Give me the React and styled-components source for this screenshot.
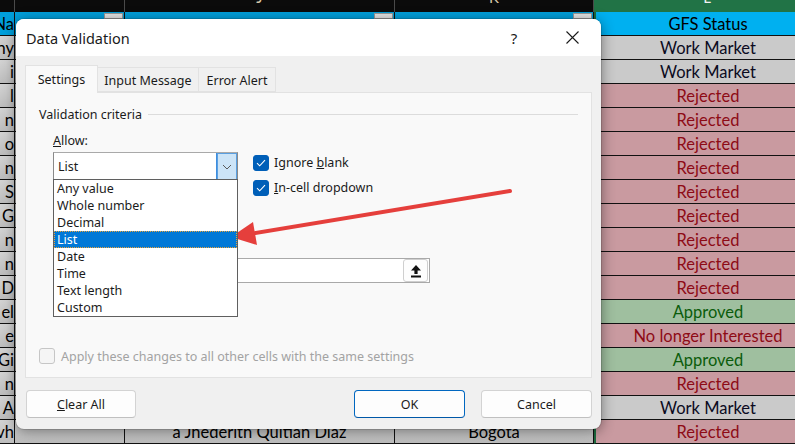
import React from 'react';
import styled, { createGlobalStyle } from 'styled-components';

const GlobalStyle = createGlobalStyle`
  html, body {
    margin: 0;
    padding: 0;
  }
  body {
    width: 795px;
    height: 445px;
    overflow: hidden;
    background: #ffffff;
    font-family: "Noto Sans", "Liberation Sans", sans-serif;
  }
`;

const UI_FONT = `"Noto Sans", "Open Sans", "Liberation Sans", sans-serif`;
const SHEET_FONT = `Lato, "Open Sans", "Liberation Sans", sans-serif`;

const tones = {
  grey: { bg: 'linear-gradient(180deg, #d3d3d3, #bdbdbd)', fg: '#000' },
  head: { bg: '#00a0dc', fg: '#000' },
  status: { bg: '#00b0f0', fg: '#000' },
  work: { bg: '#cacaca', fg: '#0b0b1e' },
  rejected: { bg: '#c99aa0', fg: '#8e0b16' },
  approved: { bg: '#9fbf9f', fg: '#0b5c0b' },
};

/* ---------- spreadsheet behind the dialog ---------- */

const Screen = styled.div`
  position: relative;
  width: 795px;
  height: 445px;
  overflow: hidden;
`;

const Sheet = styled.div`
  display: grid;
  grid-template-columns: 15px 110px 270px 199px 227px;
  grid-template-rows: 12px repeat(18, 24px);
`;

const ColHead = styled.div`
  display: flex;
  justify-content: center;
  overflow: hidden;
  background: ${p => (p.$active ? '#217346' : '#0b0b0b')};
  border-right: 1px solid #4a4a4a;
  color: ${p => (p.$active ? '#f2f2f2' : '#d8c8a8')};
  font: 15px/15px ${SHEET_FONT};
`;

const ColLetter = styled.span`
  margin-top: -10px;
`;

const Cell = styled.div`
  box-sizing: border-box;
  display: flex;
  align-items: ${p => (p.$top ? 'flex-start' : 'center')};
  justify-content: ${p => (p.$right ? 'flex-end' : 'center')};
  background: ${p => tones[p.$tone].bg};
  color: ${p => tones[p.$tone].fg};
  border-right: 1px solid #111;
  border-bottom: 1px solid #111;
  border-left: ${p => (p.$selected ? '2px solid #1d6b3f' : '0')};
  overflow: hidden;
  white-space: nowrap;
  font: 16.5px/20px ${SHEET_FONT};
  padding-top: ${p => (p.$top ? 0 : 1)}px;
`;

const FilterButton = styled.span`
  width: 19px;
  height: 6px;
  margin: 1px 1px 0 auto;
  background: #e6e6e6;
  border: 1px solid #9a9a9a;
  box-sizing: border-box;
`;

/* ---------- dialog ---------- */

const Dialog = styled.div`
  position: absolute;
  left: 16px;
  top: 19px;
  width: 585px;
  height: 410px;
  display: flex;
  flex-direction: column;
  background: #f0f0f0;
  border-radius: 8px;
  overflow: hidden;
  box-shadow: 0 2px 14px rgba(0, 0, 0, 0.45), 0 0 0 1px rgba(0, 0, 0, 0.12);
  font: 12.5px ${UI_FONT};
  color: #1b1b1b;
`;

const TitleBar = styled.div`
  height: 37px;
  flex: none;
  display: flex;
  align-items: center;
  background: #ffffff;
  padding-left: 10px;
`;

const Title = styled.div`
  flex: 1;
  font-size: 14.5px;
  color: #1a1a1a;
`;

const TitleButton = styled.div`
  width: 58px;
  height: 37px;
  display: flex;
  align-items: center;
  justify-content: center;
  font-size: 15px;
  color: #1a1a1a;
`;

const DialogBody = styled.div`
  flex: 1;
  display: flex;
  flex-direction: column;
  padding: 9px 9px 0 9px;
`;

const Tabs = styled.div`
  display: flex;
  align-items: flex-end;
  height: 27px;
`;

const Tab = styled.div`
  box-sizing: border-box;
  width: ${p => p.$w}px;
  height: ${p => (p.$active ? 28 : 25)}px;
  margin-bottom: ${p => (p.$active ? -1 : 0)}px;
  display: flex;
  align-items: center;
  justify-content: center;
  padding-top: ${p => (p.$active ? 0 : 1)}px;
  background: ${p => (p.$active ? '#f9f9f9' : '#f0f0f0')};
  border: 1px solid #e2e2e2;
  border-bottom: ${p => (p.$active ? '0' : '1px solid #e2e2e2')};
  border-left: ${p => (p.$first ? '1px solid #e2e2e2' : '0')};
  position: relative;
  z-index: ${p => (p.$active ? 1 : 0)};
  color: #1a1a1a;
`;

const Panel = styled.div`
  box-sizing: border-box;
  height: 286px;
  display: flex;
  flex-direction: column;
  background: #f9f9f9;
  border: 1px solid #e2e2e2;
  padding: 13px;
`;

const GroupHeader = styled.div`
  display: flex;
  align-items: center;
  gap: 6px;
  height: 16px;
`;

const Rule = styled.div`
  flex: 1;
  height: 1px;
  background: #dcdcdc;
`;

const CriteriaGrid = styled.div`
  display: grid;
  grid-template-columns: 185px 1fr;
  grid-template-rows: 16px 31px auto;
  column-gap: 15px;
  padding-left: 14px;
  margin-top: 11px;
`;

const FieldLabel = styled.div`
  grid-column: 1;
  height: 16px;
  line-height: 16px;
`;

const Combo = styled.div`
  grid-column: 1;
  position: relative;
  box-sizing: border-box;
  height: 28px;
  margin-top: 3px;
  display: flex;
  background: #ffffff;
  border: 1px solid #8a8a8a;
  border-top-color: #a9a9a9;
`;

const ComboValue = styled.div`
  flex: 1;
  display: flex;
  align-items: center;
  padding-left: 4px;
`;

const ComboButton = styled.div`
  width: 20px;
  margin: 0 0 -1px 0;
  display: flex;
  align-items: center;
  justify-content: center;
  background: #cce4f7;
  border-left: 1px solid #3d8ee0;
  box-shadow: inset 0 0 0 1px #5a9fe0;
`;

const ListBox = styled.div`
  position: absolute;
  left: -1px;
  top: 100%;
  width: 185px;
  box-sizing: border-box;
  background: #ffffff;
  border: 1px solid #5f5f5f;
  z-index: 2;
`;

const ListItem = styled.div`
  height: 17px;
  line-height: 17px;
  padding-left: 3px;
  background: ${p => (p.$selected ? '#0078d7' : 'transparent')};
  color: ${p => (p.$selected ? '#ffffff' : '#1b1b1b')};
  outline: ${p => (p.$selected ? '1px dotted #e9a23b' : 'none')};
  outline-offset: -1px;
`;

const Checks = styled.div`
  grid-column: 2;
  grid-row: 1 / span 2;
  padding-top: 17px;
  display: flex;
  flex-direction: column;
`;

const CheckRow = styled.label`
  height: 25px;
  flex: none;
  display: flex;
  align-items: center;
  gap: 5px;
  color: ${p => (p.$muted ? '#a3a3a3' : '#1b1b1b')};
`;

const Box = styled.span`
  box-sizing: border-box;
  width: 16px;
  height: 16px;
  flex: none;
  display: flex;
  align-items: center;
  justify-content: center;
  border-radius: 3px;
  background: ${p => (p.$checked ? '#005fb8' : '#f5f5f5')};
  border: 1px solid ${p => (p.$checked ? '#005fb8' : '#c6c6c6')};
`;

/* the Data / Source fields sit under the open list; only the source box shows */
const SourceRow = styled.div`
  grid-column: 1 / span 2;
  grid-row: 3;
  box-sizing: border-box;
  width: 377px;
  height: 25px;
  margin-top: 78px;
  display: flex;
  justify-content: flex-end;
  align-items: center;
  background: #ffffff;
  border: 1px solid #a9a9a9;
  padding-right: 1px;
`;

const UploadButton = styled.div`
  box-sizing: border-box;
  width: 25px;
  height: 23px;
  display: flex;
  align-items: center;
  justify-content: center;
  border: 1px solid #cfcfcf;
  border-radius: 3px;
  background: #fdfdfd;
`;

const ApplyRow = styled(CheckRow)`
  margin-top: auto;
  height: 16px;
  gap: 6px;
`;

const Footer = styled.div`
  display: flex;
  align-items: center;
  gap: 16px;
  margin-top: 12px;
  padding-left: 1px;
`;

const Button = styled.div`
  box-sizing: border-box;
  width: ${p => p.$w || 111}px;
  height: 28px;
  display: flex;
  align-items: center;
  justify-content: center;
  background: #fdfdfd;
  border: 1px solid ${p => (p.$primary ? '#0067c0' : '#d3d3d3')};
  border-bottom-color: ${p => (p.$primary ? '#0058a8' : '#c0c0c0')};
  border-radius: 4px;
  margin-left: ${p => (p.$push ? 'auto' : '0')};
  color: #1b1b1b;
`;

const Annotation = styled.svg`
  position: absolute;
  left: 0;
  top: 0;
  pointer-events: none;
`;

const Check = () => (
  <svg width="10" height="8" viewBox="0 0 10 8">
    <path d="M1 4.2 L3.7 6.8 L9 1.2" fill="none" stroke="#fff" strokeWidth="1.1" />
  </svg>
);

const rows = [
  ['ny', 'Work Market'],
  ['i', 'Work Market'],
  ['l', 'Rejected'],
  ['n', 'Rejected'],
  ['o', 'Rejected'],
  ['n', 'Rejected'],
  ['S', 'Rejected'],
  ['G', 'Rejected'],
  ['n', 'Rejected'],
  ['n', 'Rejected'],
  ['D', 'Rejected'],
  ['el', 'Approved'],
  ['e', 'No longer Interested'],
  ['Gi', 'Approved'],
  ['n', 'Rejected'],
  ['A', 'Work Market'],
  ['vh', 'Rejected'],
];

const toneFor = status =>
  status === 'Work Market' ? 'work' : status === 'Approved' ? 'approved' : 'rejected';

const allowOptions = ['Any value', 'Whole number', 'Decimal', 'List', 'Date', 'Time', 'Text length', 'Custom'];

function App() {
  const last = rows.length - 1;
  return (
    <Screen>
      <GlobalStyle />
      <Sheet>
        <ColHead />
        <ColHead />
        <ColHead><ColLetter>J</ColLetter></ColHead>
        <ColHead><ColLetter>K</ColLetter></ColHead>
        <ColHead $active><ColLetter>L</ColLetter></ColHead>

        <Cell $tone="head" $right>Na</Cell>
        <Cell $tone="head" $top><FilterButton /></Cell>
        <Cell $tone="head" $top><FilterButton /></Cell>
        <Cell $tone="head" $top><FilterButton /></Cell>
        <Cell $tone="status" $selected>GFS Status</Cell>

        {rows.map(([name, status], i) => (
          <React.Fragment key={i}>
            <Cell $tone="grey" $right>{name}</Cell>
            <Cell $tone="grey" />
            <Cell $tone="grey">{i === last ? 'a Jhederith Quitian Diaz' : ''}</Cell>
            <Cell $tone="grey">{i === last ? 'Bogota' : ''}</Cell>
            <Cell $tone={toneFor(status)} $selected>{status}</Cell>
          </React.Fragment>
        ))}
      </Sheet>

      <Dialog>
        <TitleBar>
          <Title>Data Validation</Title>
          <TitleButton>?</TitleButton>
          <TitleButton>
            <svg width="13" height="13" viewBox="0 0 13 13">
              <path d="M0.5 0.5 L12.5 12.5 M12.5 0.5 L0.5 12.5" stroke="#1a1a1a" strokeWidth="1.1" />
            </svg>
          </TitleButton>
        </TitleBar>

        <DialogBody>
          <Tabs>
            <Tab $w={73} $active $first>Settings</Tab>
            <Tab $w={101}>Input Message</Tab>
            <Tab $w={77}>Error Alert</Tab>
          </Tabs>

          <Panel>
            <GroupHeader>
              <span>Validation criteria</span>
              <Rule />
            </GroupHeader>

            <CriteriaGrid>
              <FieldLabel><u>A</u>llow:</FieldLabel>
              <Combo>
                <ComboValue>List</ComboValue>
                <ComboButton>
                  <svg width="10" height="6" viewBox="0 0 10 6">
                    <path d="M1 1 L5 5 L9 1" fill="none" stroke="#5a5a5a" strokeWidth="1" />
                  </svg>
                </ComboButton>
                <ListBox>
                  {allowOptions.map(opt => (
                    <ListItem key={opt} $selected={opt === 'List'}>{opt}</ListItem>
                  ))}
                </ListBox>
              </Combo>

              <Checks>
                <CheckRow>
                  <Box $checked><Check /></Box>
                  <span>Ignore <u>b</u>lank</span>
                </CheckRow>
                <CheckRow>
                  <Box $checked><Check /></Box>
                  <span><u>I</u>n-cell dropdown</span>
                </CheckRow>
              </Checks>

              <SourceRow>
                <UploadButton>
                  <svg width="12" height="14" viewBox="0 0 12 14">
                    <path d="M6 1 L11 6.5 L7.6 6.5 L7.6 10 L4.4 10 L4.4 6.5 L1 6.5 Z" fill="#111" />
                    <rect x="1" y="11.5" width="10" height="2" fill="#111" />
                  </svg>
                </UploadButton>
              </SourceRow>
            </CriteriaGrid>

            <ApplyRow $muted>
              <Box />
              <span>Apply these changes to all other cells with the same settings</span>
            </ApplyRow>
          </Panel>

          <Footer>
            <Button $w={110}><u>C</u>lear All</Button>
            <Button $push $primary>OK</Button>
            <Button>Cancel</Button>
          </Footer>
        </DialogBody>
      </Dialog>

      <Annotation width="795" height="445" viewBox="0 0 795 445">
        <line x1="510" y1="191" x2="250" y2="234" stroke="#e53f3c" strokeWidth="4" strokeLinecap="round" />
        <polygon points="231,237 253,222 257,245" fill="#e53f3c" />
      </Annotation>
    </Screen>
  );
}

export default App;
